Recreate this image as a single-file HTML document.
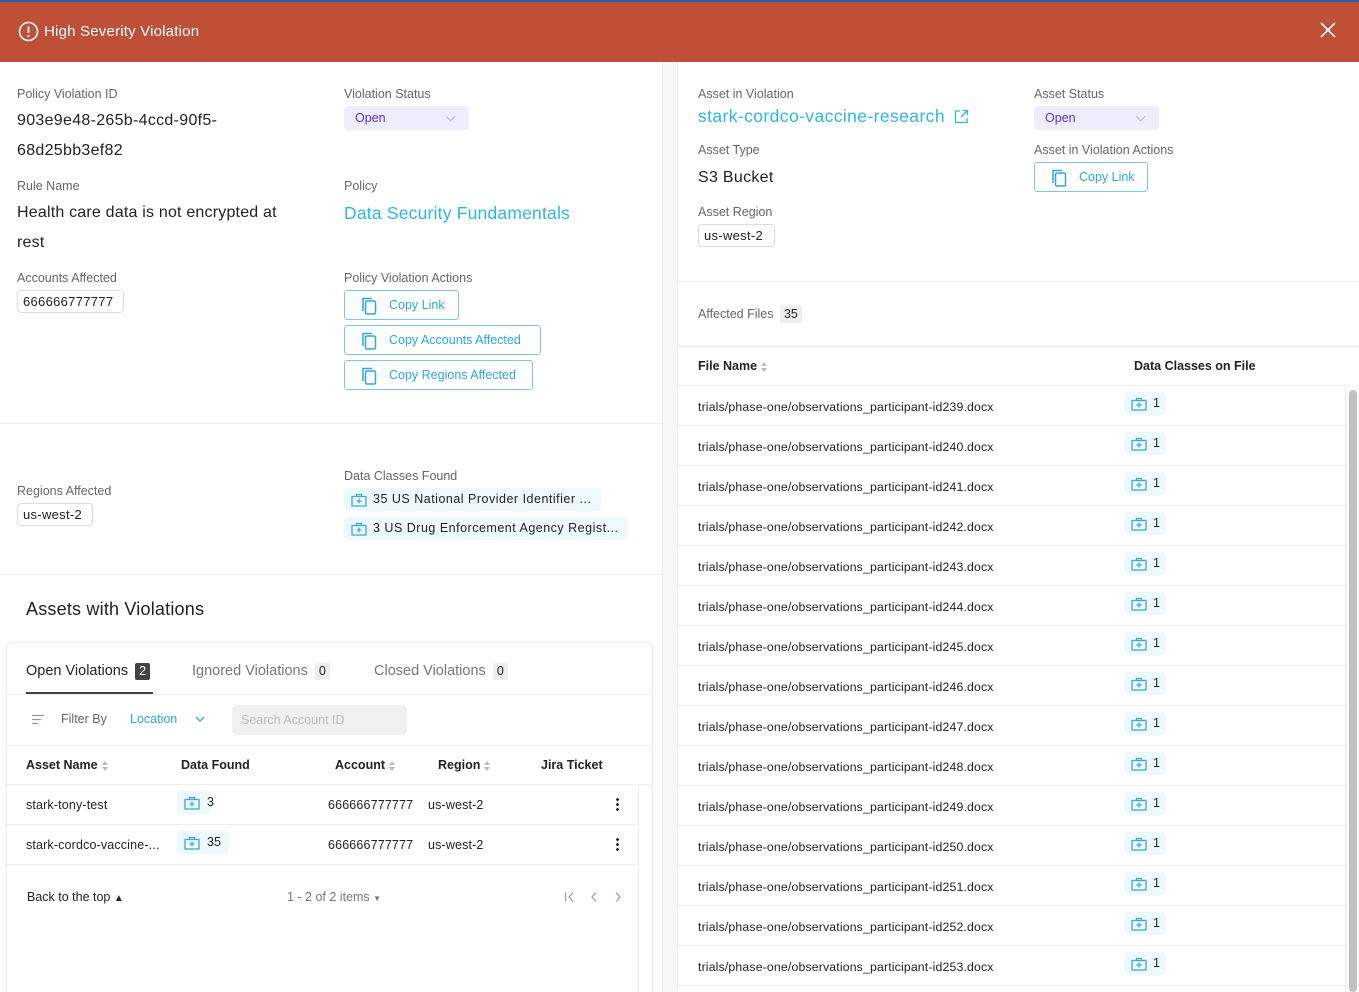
<!DOCTYPE html>
<html style="width:1359px;height:992px;overflow:hidden"><head><meta charset="utf-8"><style>
*{box-sizing:border-box;margin:0;padding:0}
body{width:1359px;height:992px;overflow:hidden;background:#fff;font-family:"Liberation Sans",sans-serif;color:#222;position:relative}
.a{position:absolute;white-space:nowrap}
.lbl{font-size:12.5px;color:#666}
.val{font-size:16px;color:#222}
.tag{position:absolute;border:1px solid #ddd;border-radius:4px;font-size:13px;padding:0 5px;height:23px;line-height:21px;color:#222;letter-spacing:.3px}
.btn{position:absolute;border:1px solid #7cc8ec;border-radius:3px;height:30px;color:#2ea6de;font-size:12.5px;line-height:28px;padding-left:44px}
.btn svg{position:absolute;left:14px;top:5px}
.sel{position:absolute;background:#efedfb;border-radius:4px;height:24px;width:125px;color:#5b2fd6;font-size:12.5px;line-height:24px;padding-left:11px}
.sel:after{content:"";position:absolute;right:15px;top:7px;width:6px;height:6px;border-right:1.5px solid #bbb;border-bottom:1.5px solid #bbb;transform:rotate(45deg)}
.chip{position:absolute;background:#eef9fe;border-radius:4px;height:23px;font-size:12.5px;line-height:23px;color:#222}
.chip svg{position:absolute;left:7px;top:5px}
.hl{position:absolute;height:1px;background:#eee}
.th{font-size:12.5px;font-weight:bold;color:#222}
.sort{display:inline-block;vertical-align:middle;margin-left:4px;width:7px;height:10px;position:relative}
.sort:before,.sort:after{content:"";position:absolute;left:0;border-left:3.5px solid transparent;border-right:3.5px solid transparent}
.sort:before{top:0;border-bottom:4px solid #bbb}.sort:after{bottom:0;border-top:4px solid #bbb}
.fn{font-size:12.3px;color:#222;letter-spacing:.15px}
.cnt{display:inline-block;background:#eee;border-radius:2px;padding:0 4px;font-size:12.5px;color:#222;height:17px;line-height:17px;margin-left:3px}
</style></head><body>
<svg width="0" height="0" style="position:absolute"><defs>
<symbol id="kit" viewBox="0 0 16 14"><path d="M5.5 3V1.5h5V3M1 3.5h14v9.5H1z M8 5.5v5M5.5 8h5" fill="none" stroke="#3aa8dc" stroke-width="1.3"/></symbol>
<symbol id="cp" viewBox="0 0 20 20"><path d="M4 15V2.5h9" fill="none" stroke="#2ea6de" stroke-width="1.5"/><rect x="6.5" y="5" width="10" height="13" rx="1.5" fill="none" stroke="#2ea6de" stroke-width="1.5"/></symbol>
</defs></svg>
<div class="a" style="left:0;top:0;width:1359px;height:62px;background:#c04f37;border-top:2px solid #2a5fa8"></div>
<svg class="a" style="left:18px;top:21px" width="21" height="21" viewBox="0 0 21 21"><circle cx="10.5" cy="10.5" r="9" fill="none" stroke="#fff" stroke-width="1.6"/><path d="M10.5 5.5v6.5" stroke="#fff" stroke-width="1.8"/><circle cx="10.5" cy="15" r="1.1" fill="#fff"/></svg>
<div class="a" style="left:44px;top:23px;color:#fff;font-size:15px;letter-spacing:.2px">High Severity Violation</div>
<svg class="a" style="left:1320px;top:22px" width="16" height="16"><path d="M1 1l14 14M15 1L1 15" stroke="#fff" stroke-width="1.6"/></svg>

<div class="a" style="left:662px;top:62px;width:16px;height:930px;background:#f7f7f7;border-left:1px solid #eee;border-right:1px solid #eee"></div>

<div class="a lbl" style="left:17px;top:87px">Policy Violation ID</div>
<div class="a val" style="left:17px;top:106px;line-height:30px;letter-spacing:.3px">903e9e48-265b-4ccd-90f5-<br>68d25bb3ef82</div>
<div class="a lbl" style="left:344px;top:87px">Violation Status</div>
<div class="sel" style="left:344px;top:106px">Open</div>
<div class="a lbl" style="left:17px;top:179px">Rule Name</div>
<div class="a val" style="left:17px;top:198px;line-height:30px;letter-spacing:.2px">Health care data is not encrypted at<br>rest</div>
<div class="a lbl" style="left:344px;top:179px">Policy</div>
<div class="a" style="left:344px;top:203px;font-size:17.5px;color:#2fb4ea;letter-spacing:.2px">Data Security Fundamentals</div>
<div class="a lbl" style="left:17px;top:271px">Accounts Affected</div>
<div class="tag" style="left:17px;top:290px;width:107px">666666777777</div>
<div class="a lbl" style="left:344px;top:271px">Policy Violation Actions</div>
<div class="btn" style="left:344px;top:290px;width:115px"><svg width="20" height="20"><use href="#cp"/></svg>Copy Link</div>
<div class="btn" style="left:344px;top:325px;width:197px"><svg width="20" height="20"><use href="#cp"/></svg>Copy Accounts Affected</div>
<div class="btn" style="left:344px;top:360px;width:189px"><svg width="20" height="20"><use href="#cp"/></svg>Copy Regions Affected</div>
<div class="hl" style="left:0;top:423px;width:662px"></div>
<div class="a lbl" style="left:17px;top:484px">Regions Affected</div>
<div class="tag" style="left:17px;top:503px;width:76px">us-west-2</div>
<div class="a lbl" style="left:344px;top:469px">Data Classes Found</div>
<div class="chip" style="left:344px;top:488px;width:257px;padding-left:29px;letter-spacing:.5px"><svg width="16" height="14"><use href="#kit"/></svg>35 US National Provider Identifier ...</div>
<div class="chip" style="left:344px;top:517px;width:283px;padding-left:29px;letter-spacing:.5px"><svg width="16" height="14"><use href="#kit"/></svg>3 US Drug Enforcement Agency Regist...</div>
<div class="hl" style="left:0;top:574px;width:662px"></div>
<div class="a" style="left:26px;top:599px;font-size:18px;color:#222;letter-spacing:.2px">Assets with Violations</div>

<div class="a" style="left:6px;top:642px;width:647px;height:350px;border:1px solid #eee;border-bottom:none;border-radius:6px 6px 0 0;box-shadow:0 0 4px rgba(0,0,0,.06)"></div>
<div class="a" style="left:26px;top:663px;font-size:14.5px;color:#222">Open Violations <span class="cnt" style="background:#444;color:#fff">2</span></div>
<div class="a" style="left:26px;top:692px;width:127px;height:3px;background:#444"></div>
<div class="a" style="left:192px;top:663px;font-size:14.5px;color:#777">Ignored Violations <span class="cnt">0</span></div>
<div class="a" style="left:374px;top:663px;font-size:14.5px;color:#777">Closed Violations <span class="cnt">0</span></div>
<div class="hl" style="left:7px;top:694px;width:645px"></div>
<svg class="a" style="left:32px;top:714px" width="13" height="11"><path d="M0 1.5h12M0 5.5h9M0 9.5h6" stroke="#999" stroke-width="1.2"/></svg>
<div class="a" style="left:61px;top:712px;font-size:12.5px;color:#666">Filter By</div>
<div class="a" style="left:130px;top:712px;font-size:12.5px;color:#2ea6de">Location</div>
<svg class="a" style="left:195px;top:716px" width="10" height="7"><path d="M1 1l4 4 4-4" fill="none" stroke="#2ea6de" stroke-width="1.3"/></svg>
<div class="a" style="left:232px;top:705px;width:175px;height:30px;background:#f0f0f0;border-radius:4px;font-size:12.5px;color:#bbb;line-height:30px;padding-left:9px">Search Account ID</div>
<div class="hl" style="left:7px;top:745px;width:645px"></div>
<div class="a th" style="left:26px;top:758px">Asset Name<span class="sort"></span></div>
<div class="a th" style="left:181px;top:758px">Data Found</div>
<div class="a th" style="left:335px;top:758px">Account<span class="sort"></span></div>
<div class="a th" style="left:438px;top:758px">Region<span class="sort"></span></div>
<div class="a th" style="left:541px;top:758px">Jira Ticket</div>
<div class="hl" style="left:7px;top:784px;width:645px"></div>
<div class="a" style="left:638px;top:785px;width:1px;height:207px;background:#eee"></div>
<div class="a fn" style="left:26px;top:798px;font-size:12.5px">stark-tony-test</div>
<div class="chip" style="left:177px;top:791px;width:34px;padding-left:30px"><svg width="16" height="14"><use href="#kit"/></svg>3</div>
<div class="a fn" style="left:328px;top:798px;font-size:12.5px">666666777777</div>
<div class="a fn" style="left:428px;top:798px;font-size:12.5px">us-west-2</div>
<div class="a" style="left:616px;top:797px;width:3px;height:15px;background:radial-gradient(circle,#222 1.3px,transparent 1.5px) 0 0/3px 5px"></div>
<div class="hl" style="left:7px;top:824px;width:631px"></div>
<div class="a fn" style="left:26px;top:838px;font-size:12.5px">stark-cordco-vaccine-...</div>
<div class="chip" style="left:177px;top:831px;width:52px;padding-left:30px"><svg width="16" height="14"><use href="#kit"/></svg>35</div>
<div class="a fn" style="left:328px;top:838px;font-size:12.5px">666666777777</div>
<div class="a fn" style="left:428px;top:838px;font-size:12.5px">us-west-2</div>
<div class="a" style="left:616px;top:837px;width:3px;height:15px;background:radial-gradient(circle,#222 1.3px,transparent 1.5px) 0 0/3px 5px"></div>
<div class="hl" style="left:7px;top:864px;width:631px"></div>
<div class="a" style="left:27px;top:890px;font-size:12.5px">Back to the top <span style="font-size:10px">▲</span></div>
<div class="a" style="left:287px;top:890px;font-size:12.5px;color:#777">1 - 2 of 2 items <span style="font-size:8px">▼</span></div>
<svg class="a" style="left:564px;top:891px" width="60" height="12"><path d="M1.5 1.5v9M9 1.5L5 6l4 4.5M32 1.5L28 6l4 4.5M52 1.5L56 6l-4 4.5" fill="none" stroke="#999" stroke-width="1.2"/></svg>

<div class="a lbl" style="left:698px;top:87px">Asset in Violation</div>
<div class="a" style="left:698px;top:106px;font-size:17.5px;color:#2fb4ea;letter-spacing:.4px">stark-cordco-vaccine-research</div>
<svg class="a" style="left:954px;top:109px" width="15" height="15"><path d="M6 2H1.5v11.5H13V9M8.5 1.5h5v5M13.5 1.5L7 8" fill="none" stroke="#2fb4ea" stroke-width="1.3"/></svg>
<div class="a lbl" style="left:1034px;top:87px">Asset Status</div>
<div class="sel" style="left:1034px;top:106px">Open</div>
<div class="a lbl" style="left:698px;top:143px">Asset Type</div>
<div class="a val" style="left:698px;top:169px;letter-spacing:.3px">S3 Bucket</div>
<div class="a lbl" style="left:1034px;top:143px">Asset in Violation Actions</div>
<div class="btn" style="left:1034px;top:162px;width:114px"><svg width="20" height="20"><use href="#cp"/></svg>Copy Link</div>
<div class="a lbl" style="left:698px;top:205px">Asset Region</div>
<div class="tag" style="left:698px;top:224px;width:77px">us-west-2</div>
<div class="hl" style="left:678px;top:281px;width:681px"></div>
<div class="a lbl" style="left:698px;top:306px">Affected Files <span class="cnt">35</span></div>
<div class="hl" style="left:678px;top:346px;width:681px"></div>
<div class="a th" style="left:698px;top:359px">File Name<span class="sort"></span></div>
<div class="a th" style="left:1134px;top:359px">Data Classes on File</div>
<div class="hl" style="left:678px;top:385px;width:681px"></div>
<div class="a" style="left:1345px;top:386px;width:14px;height:606px;background:#fafafa;border-left:1px solid #eee"></div>
<div class="a" style="left:1349px;top:390px;width:8px;height:602px;background:#c1c1c1;border-radius:4px"></div>
<div id="rows"></div>
<script>
var h='';
for(var i=0;i<15;i++){var y=386+i*40;
h+='<div class="a fn" style="left:698px;top:'+(y+14)+'px">trials/phase-one/observations_participant-id'+(239+i)+'.docx</div>';
h+='<div class="chip" style="left:1124px;top:'+(y+6)+'px;width:42px;padding-left:29px"><svg width="16" height="14"><use href="#kit"/></svg>1</div>';
h+='<div class="hl" style="left:678px;top:'+(y+39)+'px;width:667px"></div>';}
document.getElementById('rows').innerHTML=h;
</script>
</body></html>
